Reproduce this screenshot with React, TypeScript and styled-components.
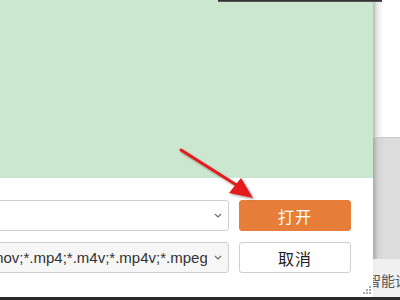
import styled, { createGlobalStyle } from 'styled-components';

const Global = createGlobalStyle`
  html, body {
    margin: 0;
    padding: 0;
    width: 400px;
    height: 300px;
    overflow: hidden;
    background: #ffffff;
    font-family: "Liberation Sans", "Noto Sans CJK SC", sans-serif;
  }
`;

function Chevron() {
    return (
        <ChevronIcon viewBox="0 0 8 5" width="8" height="5">
            <path d="M1 1 L4 4 L7 1" fill="none" stroke="#666" strokeWidth="1.1"/>
        </ChevronIcon>
    );
}

function App() {
    return (
        <Screen>
            <Global/>
            <Main>
                <Dialog>
                    <Preview/>
                    <Footer>
                        <Row>
                            <Field>
                                <FieldText/>
                                <Chevron/>
                            </Field>
                            <Button $primary>打开</Button>
                        </Row>
                        <Row>
                            <Field $muted>
                                <FieldText>mov;*.mp4;*.m4v;*.mp4v;*.mpeg;*.mpg</FieldText>
                                <Chevron/>
                            </Field>
                            <Button>取消</Button>
                        </Row>
                        <Grip viewBox="0 0 9 9" width="9" height="9">
                            <rect x="6" y="0" width="2" height="2" fill="#aaa"/>
                            <rect x="3" y="3" width="2" height="2" fill="#aaa"/>
                            <rect x="6" y="3" width="2" height="2" fill="#aaa"/>
                            <rect x="0" y="6" width="2" height="2" fill="#aaa"/>
                            <rect x="3" y="6" width="2" height="2" fill="#aaa"/>
                            <rect x="6" y="6" width="2" height="2" fill="#aaa"/>
                        </Grip>
                    </Footer>
                </Dialog>
                <Side>
                    <SideTop/>
                    <SideMid/>
                    <SideBottom>智能设置</SideBottom>
                </Side>
            </Main>
            <BottomEdge/>
            <TopShadow/>
            <Arrow viewBox="0 0 400 300" width="400" height="300">
                <defs>
                    <filter id="sh" x="-20%" y="-20%" width="140%" height="140%">
                        <feDropShadow dx="1.5" dy="1.5" stdDeviation="1.2" floodColor="#000" floodOpacity="0.35"/>
                    </filter>
                </defs>
                <g filter="url(#sh)">
                    <line x1="181" y1="150" x2="238" y2="186" stroke="#e21c1c" strokeWidth="3" strokeLinecap="round"/>
                    <polygon points="253,198 229,193 241,178" fill="#e21c1c"/>
                </g>
            </Arrow>
        </Screen>
    );
}

export default App;

const Screen = styled.div`
  position: relative;
  width: 400px;
  height: 300px;
  overflow: hidden;
  display: flex;
  flex-direction: column;
`;

const Main = styled.div`
  flex: 1;
  display: flex;
  flex-direction: row;
  min-height: 0;
`;

const Dialog = styled.div`
  flex: none;
  width: 373px;
  display: flex;
  flex-direction: column;
  background: #ffffff;
  position: relative;
  z-index: 1;
`;

const Preview = styled.div`
  height: 178px;
  background: #cce7cf;
`;

const Footer = styled.div`
  position: relative;
  flex: 1;
  display: flex;
  flex-direction: column;
  gap: 11px;
  padding: 22px 0 0 0;
  margin-left: -12px;
`;

const Row = styled.div`
  display: flex;
  align-items: center;
  gap: 10px;
`;

const Field = styled.div<{ $muted?: boolean }>`
  box-sizing: border-box;
  width: 241px;
  height: 31px;
  display: flex;
  align-items: center;
  padding: 0 6px 0 2px;
  border: 1px solid #cfcfcf;
  border-radius: 3px;
  background: ${p => (p.$muted ? '#f6f6f6' : '#ffffff')};
`;

const FieldText = styled.div`
  flex: 1;
  min-width: 0;
  overflow: hidden;
  white-space: nowrap;
  font-size: 15px;
  color: #333;
  margin-right: 7px;
`;

const ChevronIcon = styled.svg`
  flex: none;
`;

const Button = styled.div<{ $primary?: boolean }>`
  box-sizing: border-box;
  width: 112px;
  height: 31px;
  display: flex;
  align-items: center;
  justify-content: center;
  border-radius: 3px;
  font-size: 16px;
  letter-spacing: 1px;
  background: ${p => (p.$primary ? '#e67d38' : '#ffffff')};
  color: ${p => (p.$primary ? '#ffffff' : '#222222')};
  border: 1px solid ${p => (p.$primary ? '#e67d38' : '#cfcfcf')};
`;

const Grip = styled.svg`
  position: absolute;
  right: 1px;
  bottom: 2px;
`;

const Side = styled.div`
  flex: 1;
  min-width: 0;
  display: flex;
  flex-direction: column;
  background: linear-gradient(to right, #b8b8b8 0px, #e6e6e6 4px, #ffffff 10px);
`;

const SideTop = styled.div`
  height: 137px;
`;

const SideMid = styled.div`
  height: 121px;
  background: linear-gradient(to right, #a9a9a9 0px, #d4d4d4 5px, #dcdcdc 12px);
  border-top: 1px solid #c8c8c8;
`;

const SideBottom = styled.div`
  flex: 1;
  padding: 11px 0 0 0;
  margin-left: -6px;
  white-space: nowrap;
  overflow: hidden;
  font-size: 14px;
  color: #555;
  background: linear-gradient(to right, #c4c4c4 0px, #ededed 5px, #f0f0f0 12px);
`;

const BottomEdge = styled.div`
  height: 3px;
  background: #2a2a2a;
`;

const TopShadow = styled.div`
  position: absolute;
  top: 0;
  left: 218px;
  width: 164px;
  height: 2px;
  z-index: 2;
  background: linear-gradient(to bottom, #111 0px, #555 1px);
`;

const Arrow = styled.svg`
  position: absolute;
  left: 0;
  top: 0;
  z-index: 2;
  pointer-events: none;
`;
